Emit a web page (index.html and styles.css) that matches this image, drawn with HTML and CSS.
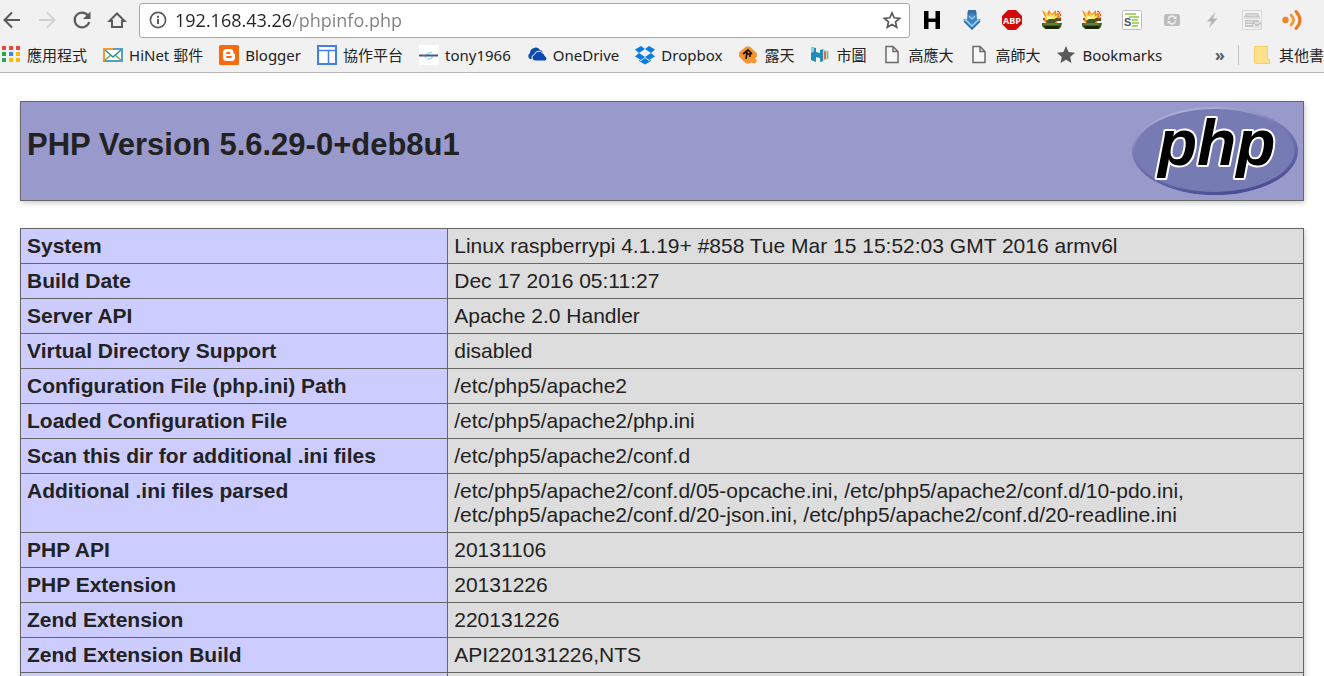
FILE: index.html
```html
<!DOCTYPE html>
<html lang="zh-Hant">
<head>
  <meta charset="UTF-8">
  <title>phpinfo()</title>
  <link rel="stylesheet" href="styles.css">
</head>
<body>
  <header class="browser">
    <div class="toolbar">
      <nav class="nav-buttons">
        <button class="icon-btn" aria-label="Back">
          <svg viewBox="0 0 20 20"><path d="M18 10H3M10 2.500L2.500 10L10 17.500" fill="none" stroke="#5a5a5a" stroke-width="2"/></svg>
        </button>
        <button class="icon-btn" aria-label="Forward" disabled>
          <svg viewBox="0 0 20 20"><path d="M2 10H17M10 2.500L17.500 10L10 17.500" fill="none" stroke="#d2d2d2" stroke-width="2"/></svg>
        </button>
        <button class="icon-btn" aria-label="Reload">
          <svg viewBox="0 0 20 20"><path d="M16 5.500A7.400 7.400 0 1 0 17.200 12" fill="none" stroke="#5a5a5a" stroke-width="2.200"/><path d="M18.500 1.500V9H11z" fill="#5a5a5a"/></svg>
        </button>
        <button class="icon-btn" aria-label="Home">
          <svg viewBox="0 0 20 20"><path d="M2.500 11L10 3.500L17.500 11H15V17H5V11z" fill="none" stroke="#5a5a5a" stroke-width="2"/></svg>
        </button>
      </nav>

      <div class="omnibox">
        <svg class="info-icon" viewBox="0 0 18 18"><circle cx="9" cy="9" r="7.600" fill="none" stroke="#5a5a5a" stroke-width="1.600"/><path d="M8 8h2v5H8zM8 4.800h2v2H8z" fill="#5a5a5a"/></svg>
        <input class="url" type="text" aria-label="Address" value="192.168.43.26/phpinfo.php">
        <button class="icon-btn" aria-label="Bookmark this page">
          <svg viewBox="0 0 20 20"><path d="M10 2.800L12.200 7.800L17.600 8.300L13.500 11.800L14.700 17.200L10 14.400L5.300 17.200L6.500 11.800L2.400 8.300L7.800 7.800z" fill="none" stroke="#5a5a5a" stroke-width="1.700"/></svg>
        </button>
      </div>

      <div class="extensions">
        <button class="icon-btn" aria-label="H">
          <svg viewBox="0 0 20 20"><path d="M2 1h4.500v7.500h7V1H18v18h-4.500v-7h-7v7H2z" fill="#000"/></svg>
        </button>
        <button class="icon-btn" aria-label="Download">
          <svg viewBox="0 0 20 20"><path d="M6 0h8l1 9h4l-9 10L1 9h4z" fill="#5b9bd2"/><path d="M6 0h8l.5 5h-9z" fill="#3b6f9f"/><path d="M10 3l4 2 1 5-5 5-5-5 1-5z" fill="#3a86c6"/><path d="M2 11l8 8 8-8" fill="none" stroke="#1f6bab" stroke-width="1.500"/><path d="M3 9l7 7 7-7M7 6l3 3 3-3" fill="none" stroke="#a8d4ee" stroke-width="1.200"/></svg>
        </button>
        <button class="icon-btn" aria-label="ABP">
          <svg viewBox="0 0 20 20"><path d="M6 0h8l6 6v8l-6 6H6l-6-6V6z" fill="#d40a0a"/><text class="abp-text" x="10" y="13.500" text-anchor="middle">ABP</text></svg>
        </button>
        <button class="icon-btn" aria-label="Tank">
          <svg viewBox="0 0 20 20"><path d="M0 0l5 4 2-4 3 4 4-4v4l5-3-2 5 3 2-4 2-1 3H4l-3-3 2-3z" fill="#f58220"/><path d="M2 2l5 3 1-3 2 3 3-2v3l3-1-2 4-9 2-3-3 2-2z" fill="#ffd94a"/><path d="M5 6l4 1 3-2-1 3-6 2z" fill="#fffbc0"/><path d="M15 1h2v1h-2zM18 4h1v2h-1zM1 8h2v2H1zM17 8h2v1h-2z" fill="#d8441c"/><path d="M4 11l3-2h6l1-1h2l1 1h2v2h-5l-1 2H5z" fill="#40552a"/><path d="M0 13h20l-1 4-2 2H3l-3-3z" fill="#43601f"/><path d="M2 16h16l-2 3H4z" fill="#1b2510"/><path d="M2 14h15" stroke="#7f9f3d"/></svg>
        </button>
        <button class="icon-btn" aria-label="Tank 2">
          <svg viewBox="0 0 20 20"><path d="M0 0l5 4 2-4 3 4 4-4v4l5-3-2 5 3 2-4 2-1 3H4l-3-3 2-3z" fill="#f58220"/><path d="M2 2l5 3 1-3 2 3 3-2v3l3-1-2 4-9 2-3-3 2-2z" fill="#ffd94a"/><path d="M5 6l4 1 3-2-1 3-6 2z" fill="#fffbc0"/><path d="M15 1h2v1h-2zM18 4h1v2h-1zM1 8h2v2H1zM17 8h2v1h-2z" fill="#d8441c"/><path d="M4 11l3-2h6l1-1h2l1 1h2v2h-5l-1 2H5z" fill="#40552a"/><path d="M0 13h20l-1 4-2 2H3l-3-3z" fill="#43601f"/><path d="M2 16h16l-2 3H4z" fill="#1b2510"/><path d="M2 14h15" stroke="#7f9f3d"/></svg>
        </button>
        <button class="icon-btn" aria-label="Subtitles">
          <svg viewBox="0 0 20 20"><rect x=".5" y=".5" width="19" height="19" rx="1" fill="#fff" stroke="#bdbdbd"/><path d="M3 4h11M7 7h10M10 10h6M10 13h7M10 16h6" stroke="#8dc63f" stroke-width="1.500"/><text class="sub-text" x="2" y="16">S</text></svg>
        </button>
        <button class="icon-btn" aria-label="Sync">
          <svg viewBox="0 0 20 20"><rect x="2" y="4" width="16" height="12" rx="2.500" fill="#bcbcbc"/><path d="M6.200 9.500a3.900 3.900 0 0 1 6.800-2M13.800 10.500a3.900 3.900 0 0 1-6.800 2" fill="none" stroke="#f1f1f1" stroke-width="1.500"/><path d="M14.300 6v3h-3zM5.700 14v-3h3z" fill="#f1f1f1"/></svg>
        </button>
        <button class="icon-btn" aria-label="Lightning">
          <svg viewBox="0 0 20 20"><path d="M13.500 2L5 11.500h4.500L7 18l8.500-9.500H11z" fill="#b5b5b5"/></svg>
        </button>
        <button class="icon-btn" aria-label="Printer">
          <svg viewBox="0 0 20 20"><rect x=".5" y=".5" width="19" height="19" fill="#f4f4f4" stroke="#d8d8d8"/><path d="M4 3h12l2 4v2H2V7z" fill="#c8c8c8"/><path d="M5 5h10M2 8h16" stroke="#eee"/><path d="M3 10h14v7H3z" fill="#c4c4c4"/><path d="M4 12h7M4 14.500h6" stroke="#eee"/><path d="M11 12h8v6h-8z" fill="#e2e2e2"/><path d="M11 12.500l4 3 4-3" fill="none" stroke="#aaa"/></svg>
        </button>
        <button class="icon-btn" aria-label="Sound">
          <svg viewBox="0 0 20 20"><circle cx="3.500" cy="10" r="3.200" fill="#ee8625"/><path d="M9 5q5 5 0 10" fill="none" stroke="#f29a3a" stroke-width="2.800" stroke-linecap="round"/><path d="M14 1.500q8 8.500 0 17" fill="none" stroke="#ea7a1c" stroke-width="3" stroke-linecap="round"/></svg>
        </button>
      </div>
    </div>

    <div class="bookmarks">
      <nav class="bookmark-list">
        <a class="bookmark" href="#">
          <svg viewBox="0 0 20 20"><path d="M1 1h4v4H1zM8 1h4v4H8zM15 1h4v4h-4z" fill="#e8453c"/><path d="M1 7h4v4H1zM1 13h4v4H1z" fill="#2ba24c"/><path d="M8 7h4v4H8z" fill="#3b83f6"/><path d="M15 7h4v4h-4zM8 13h4v4H8zM15 13h4v4h-4z" fill="#f9b80c"/></svg>
          應用程式
        </a>
        <a class="bookmark" href="#">
          <svg viewBox="0 0 20 20"><rect x="1" y="4" width="18" height="12" fill="#fff" stroke="#5a9bd0" stroke-width="2"/><path d="M1 16V4h9" fill="none" stroke="#f29b38" stroke-width="2"/><path d="M2 15l6-5M18 15l-6-5" stroke="#6ab04c" stroke-width="1.500"/><path d="M2 5l8 7 8-7" fill="none" stroke="#2f8f98" stroke-width="1.500"/></svg>
          HiNet 郵件
        </a>
        <a class="bookmark" href="#">
          <svg viewBox="0 0 20 20"><rect width="20" height="20" rx="1.500" fill="#f96a0e"/><path d="M7.500 4h3.500a3.500 3.500 0 0 1 3.500 3.500q0 1.500 1.500 1.500v3.500A3.500 3.500 0 0 1 12.500 16h-5A3.500 3.500 0 0 1 4 12.500v-5A3.500 3.500 0 0 1 7.500 4z" fill="#fff"/><path d="M8 8h2.500M8 12h4" stroke="#f96a0e" stroke-width="1.800" stroke-linecap="round"/></svg>
          Blogger
        </a>
        <a class="bookmark" href="#">
          <svg viewBox="0 0 20 20"><rect x="1" y="1" width="18" height="18" fill="#fff" stroke="#3f80ee" stroke-width="2"/><path d="M2 5.500h16M11.500 6v12" stroke="#3f80ee" stroke-width="1.500"/></svg>
          協作平台
        </a>
        <a class="bookmark" href="#">
          <svg viewBox="0 0 20 20"><rect width="20" height="20" fill="#fff"/><path d="M7 13q-2-4 6-6M8 14q6 0 5-3" fill="none" stroke="#a8e6f2" stroke-width="2"/><path d="M0 10.500h19" stroke="#4a548c" stroke-width="2"/><path d="M4 10.500h4" stroke="#bb4457"/></svg>
          tony1966
        </a>
        <a class="bookmark" href="#">
          <svg viewBox="0 0 20 20"><path d="M3 14a3.500 3.500 0 0 1 0-6A5.500 5.500 0 0 1 13 5a4 4 0 0 1 3 3L8 14z" fill="#0b4ab0"/><path d="M8 16a3.300 3.300 0 0 1-.5-6.500 4.500 4.500 0 0 1 8-1.500 3.500 3.500 0 0 1 2.500 3 2.600 2.600 0 0 1 0 5z" fill="#0b4ab0" stroke="#f1f1f1"/></svg>
          OneDrive
        </a>
        <a class="bookmark" href="#">
          <svg viewBox="0 0 20 20"><path d="M6 1l4 3-6 4-4-3.500zM14 1l6 3.500L16 8l-6-4zM4 8l6 4-4 3-6-3.500zM16 8l4 3.500-6 3.500-4-3zM10 13l4 3 2-1v1l-6 3.500L4 16v-1l2 1z" fill="#087be6"/></svg>
          Dropbox
        </a>
        <a class="bookmark" href="#">
          <svg viewBox="0 0 20 20"><path d="M8 1.500h4l7 7v3l-2 2 2 2-2 3-4-1-2 1H8L1 11.500v-4z" fill="#f79430"/><path d="M5 9l5-4 4 4M8 14l1-7M8 9h4v3" fill="none" stroke="#111" stroke-width="1.700"/></svg>
          露天
        </a>
        <a class="bookmark" href="#">
          <svg viewBox="0 0 20 20"><path d="M1 2l5 1v4l4 1V5l3-1v12l-3 1v-4l-4-1v5l-5-2z" fill="#2389b9"/><path d="M1 2l3 .5v4L1 8z" fill="#8ad3e2"/><path d="M13 4l6 2v8l-6 2z" fill="#c4dfd5"/><path d="M14 6l2 .5V14l-2 .5z" fill="#e06c3a"/><path d="M17 6l1 .5v7l-1 .5z" fill="#92a943"/></svg>
          市圖
        </a>
        <a class="bookmark" href="#">
          <svg viewBox="0 0 20 20"><path d="M4 1.500h7l5 5v11H4zM11 1.500v5h5" fill="#f8f8f8" stroke="#6a6a6a" stroke-width="1.500"/></svg>
          高應大
        </a>
        <a class="bookmark" href="#">
          <svg viewBox="0 0 20 20"><path d="M4 1.500h7l5 5v11H4zM11 1.500v5h5" fill="#f8f8f8" stroke="#6a6a6a" stroke-width="1.500"/></svg>
          高師大
        </a>
        <a class="bookmark" href="#">
          <svg viewBox="0 0 20 20"><path d="M10 1l2.600 6 6.400.7-4.800 4.300L15.500 18 10 14.800 4.500 18l1.300-6L1 7.700 7.400 7z" fill="#5a5a5a"/></svg>
          Bookmarks
        </a>
      </nav>
      <button class="more-btn" aria-label="More bookmarks">»</button>
      <a class="bookmark other" href="#">
        <svg viewBox="0 0 20 20"><path d="M1 1h14v13h2v5H3l-2-1z" fill="#fde28b"/><path d="M1.500 1.500h13v13h2v4h-13l-2-1z" fill="none" stroke="#f1d06a"/></svg>
        其他書
      </a>
    </div>
  </header>

  <main class="page">
    <div class="php-header">
      <h1>PHP Version 5.6.29-0+deb8u1</h1>
      <svg class="php-logo" viewBox="0 0 166 88" role="img" aria-label="PHP logo">
        <defs>
          <linearGradient id="rim" x1="0.300" y1="0" x2="0.700" y2="1">
            <stop offset="0" stop-color="#b3b4dc"/>
            <stop offset="0.350" stop-color="#787cb5"/>
            <stop offset="0.650" stop-color="#6467a8"/>
            <stop offset="1" stop-color="#484a91"/>
          </linearGradient>
        </defs>
        <ellipse cx="83" cy="44" rx="83" ry="44" fill="url(#rim)"/>
        <ellipse cx="82.500" cy="43.500" rx="80" ry="41.500" fill="#777bb3"/>
        <text class="logo-text" x="26" y="58">php</text>
      </svg>
    </div>

    <table class="info">
      <tr><th scope="row">System</th><td>Linux raspberrypi 4.1.19+ #858 Tue Mar 15 15:52:03 GMT 2016 armv6l</td></tr>
      <tr><th scope="row">Build Date</th><td>Dec 17 2016 05:11:27</td></tr>
      <tr><th scope="row">Server API</th><td>Apache 2.0 Handler</td></tr>
      <tr><th scope="row">Virtual Directory Support</th><td>disabled</td></tr>
      <tr><th scope="row">Configuration File (php.ini) Path</th><td>/etc/php5/apache2</td></tr>
      <tr><th scope="row">Loaded Configuration File</th><td>/etc/php5/apache2/php.ini</td></tr>
      <tr><th scope="row">Scan this dir for additional .ini files</th><td>/etc/php5/apache2/conf.d</td></tr>
      <tr><th scope="row">Additional .ini files parsed</th><td>/etc/php5/apache2/conf.d/05-opcache.ini, /etc/php5/apache2/conf.d/10-pdo.ini,<br>/etc/php5/apache2/conf.d/20-json.ini, /etc/php5/apache2/conf.d/20-readline.ini</td></tr>
      <tr><th scope="row">PHP API</th><td>20131106</td></tr>
      <tr><th scope="row">PHP Extension</th><td>20131226</td></tr>
      <tr><th scope="row">Zend Extension</th><td>220131226</td></tr>
      <tr><th scope="row">Zend Extension Build</th><td>API220131226,NTS</td></tr>
      <tr><th scope="row">&nbsp;</th><td>&nbsp;</td></tr>
    </table>
  </main>
</body>
</html>
```
FILE: styles.css
```css
* {
  box-sizing: border-box;
}

body {
  margin: 0;
  height: 100vh;
  display: flex;
  flex-direction: column;
  overflow: hidden;
  background: #fff;
  color: #222;
  font-family: "Liberation Sans", Arial, sans-serif;
}

/* browser bars */
.browser {
  flex: none;
  background: #f1f1f1;
  border-bottom: 1px solid #b6b6b6;
}

.toolbar {
  display: flex;
  align-items: center;
  gap: 12px;
  height: 38px;
  padding: 2px 22px 0 2px;
}

.nav-buttons {
  display: flex;
  gap: 15px;
}

.icon-btn {
  flex: none;
  width: 20px;
  height: 20px;
  padding: 0;
  border: none;
  background: none;
}

.icon-btn svg {
  display: block;
  width: 20px;
  height: 20px;
}

.omnibox {
  flex: 1;
  min-width: 0;
  display: flex;
  align-items: center;
  height: 35px;
  padding: 0 7px 0 9px;
  border: 1px solid #a9a9a9;
  border-radius: 3px;
  background: #fff;
}

.info-icon {
  flex: none;
  width: 18px;
  height: 18px;
}

/* host part is black, the path after it grey */
.url {
  flex: 1;
  min-width: 0;
  margin-left: 8px;
  padding: 0;
  border: none;
  outline: none;
  font-family: "Open Sans", sans-serif;
  font-size: 18px;
  line-height: 26px;
  color: transparent;
  background: linear-gradient(90deg, #222 117px, #808080 117px);
  -webkit-background-clip: text;
  background-clip: text;
}

.extensions {
  display: flex;
  gap: 20px;
}

.abp-text {
  font: bold 9px "Open Sans", sans-serif;
  fill: #fff;
}

.sub-text {
  font: bold 11px "Liberation Sans", sans-serif;
  fill: #555;
}

.bookmarks {
  display: flex;
  align-items: center;
  height: 34px;
  font-family: "Noto Sans", "Noto Sans CJK TC", sans-serif;
  font-size: 15px;
}

.bookmark-list {
  flex: 1;
  min-width: 0;
  display: flex;
  gap: 16px;
  padding-left: 1px;
  overflow: hidden;
}

.bookmark {
  flex: none;
  display: flex;
  align-items: center;
  gap: 6px;
  line-height: 24px;
  color: #222;
  text-decoration: none;
  white-space: nowrap;
}

.bookmark svg {
  flex: none;
  width: 20px;
  height: 20px;
}

.more-btn {
  width: 20px;
  margin-right: 8px;
  padding: 0;
  border: none;
  background: none;
  font: bold 16px "Noto Sans", sans-serif;
  color: #5a5a5a;
}

.other {
  padding-left: 14px;
  border-left: 1px solid #c4c4c4;
  line-height: 20px;
}

/* phpinfo page */
.page {
  flex: 1;
  min-height: 0;
  padding: 28px 20px 0;
  overflow: hidden;
}

.php-header {
  display: flex;
  justify-content: space-between;
  align-items: flex-start;
  margin-bottom: 27px;
  padding: 5px;
  border: 1px solid #666;
  background: #9999cc;
  box-shadow: 1px 2px 5px #ccc;
}

.php-header h1 {
  margin: 20px 0 0;
  padding-left: 1px;
  font-size: 31px;
  line-height: 36px;
}

.php-logo {
  flex: none;
  width: 166px;
  height: 88px;
}

.logo-text {
  font: italic bold 64px "Liberation Sans", Arial, sans-serif;
  fill: #000;
  stroke: #fff;
  stroke-width: 4px;
  stroke-linejoin: round;
  paint-order: stroke;
}

.info {
  width: 100%;
  table-layout: fixed;
  border-collapse: collapse;
  box-shadow: 1px 2px 5px #ccc;
  font-size: 21px;
  line-height: 24px;
}

.info th,
.info td {
  padding: 5px 6px;
  border: 1px solid #666;
  text-align: left;
  vertical-align: top;
}

.info th {
  width: 33.3%;
  background: #ccccff;
}

.info td {
  background: #ddd;
}
```
